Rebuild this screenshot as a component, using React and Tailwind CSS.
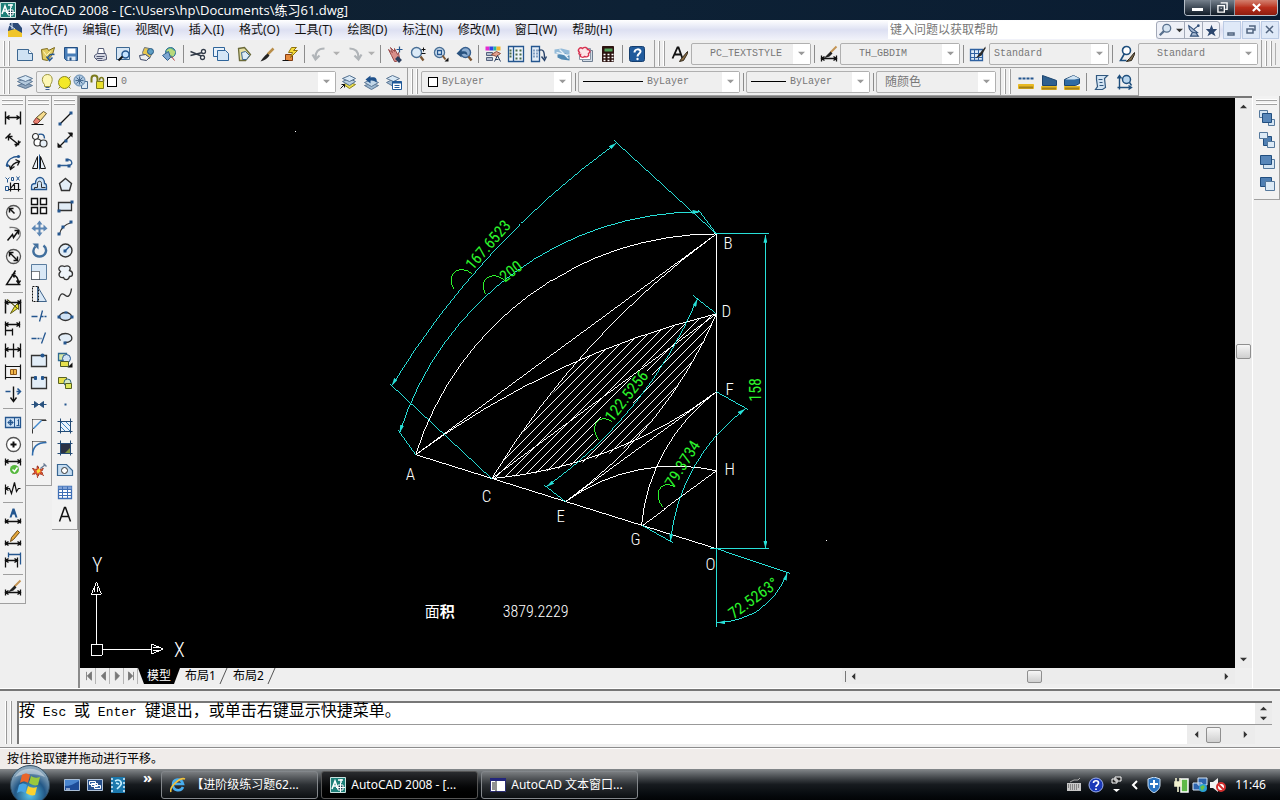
const INK = '#111111'
const BLUE = '#24568f'
const STEEL = '#5c86b4'
const PALE = '#cfe2f3'
const GOLD = '#e8b923'

const icons = {
  new: <><path d="M0 3h11l4 4v7H0z" fill={PALE} stroke="#3c6791" /><path d="M11 3v4h4" fill="#fff" stroke="#3c6791" /></>,
  open: <><path d="M1 3l6-1 1 2 6-3-2 7-5 6-5-1z" fill="#e3cd62" stroke="#7d6a1c" /><path d="M3 5l3 4 4-4" stroke="#fff6c4" /><path d="M14 8c-4-1-6 1-6 3M6 10l3 4 3-3" stroke={BLUE} strokeWidth="1.500" /></>,
  save: <><path d="M1 1h13v13H3l-2-2z" fill="#4a7fb8" stroke="#234f83" /><path d="M4 2h8v5H4z" fill="#fff" /><path d="M4 10h8v4H4z" fill="#dce8f4" /><path d="M6 11h2v3H6z" fill="#234f83" /></>,
  print: <><path d="M5 7l1-5h5l1 5" fill="#fff" stroke="#555d77" /><path d="M2 9l3-2h8l1 3v3l-4 1H5l-3-3z" fill="#d4d7e2" stroke="#4f5672" /><path d="M4 10h8M4 12h6" stroke="#4f5672" /></>,
  preview: <><path d="M1 1h13v12H1z" fill="#d7e6f4" stroke="#3c6791" /><circle cx="10" cy="8" r="3.500" fill="#c5e3ff" stroke={BLUE} strokeWidth="1.400" /><path d="M7 10l-4 4" stroke={INK} strokeWidth="2" /></>,
  publish: <><path d="M4 6l2-5 5 1 3 4-3 6H6z" fill="#e9c74d" stroke="#69727e" /><path d="M1 9l6-1 4 3-3 3-6-1z" fill="#eee" stroke="#3f4a66" /><circle cx="12" cy="5" r="3" fill="#5d9ec4" stroke="#2a5a82" /></>,
  dwf: <><circle cx="9" cy="6" r="5" fill="#62b38c" stroke="#2a6c98" /><path d="M5 4c4-4 6 0 9 1l-2 5-4-2z" fill="#b9d97b" /><path d="M1 9l6-4 2 6-3 3z" fill="#7da7d2" stroke="#34618f" /><path d="M10 10l3 4" stroke="#b23b3b" /></>,
  cut: <><path d="M0 5l12 5M0 9l12-3" stroke="#333c49" strokeWidth="1.400" /><circle cx="13" cy="5" r="2" fill="#fff" stroke="#333c49" strokeWidth="1.300" /><circle cx="12" cy="11" r="2" fill="#fff" stroke="#333c49" strokeWidth="1.300" /></>,
  copy: <><path d="M0 1h11v9H0z" fill="#e9f2fb" stroke="#2f659b" /><path d="M4 4h8l3 3v7H4z" fill="#d4e6f6" stroke="#2f659b" /></>,
  paste: <><path d="M2 2l6-1 6 7-5 6H3z" fill="#e6dfa2" stroke="#6a6a3a" strokeWidth="1.300" /><path d="M5 6l4-1 4 4-3 4H6z" fill="#dcebf8" stroke="#3c6791" /></>,
  brush: <><path d="M14 2L8 8" stroke="#b98e4a" strokeWidth="2.500" /><path d="M8 7l2 2c-2 3-5 5-9 6 2-3 4-6 7-8z" fill="#222" /></>,
  blockEdit: <><path d="M3 8h7v6H3z" fill="#e68a3c" stroke="#823c12" /><path d="M9 1L6 6h4l-2 5 7-7h-4l3-3z" fill="#f6dc3a" stroke="#8f7310" /><path d="M0 14h6" stroke={INK} /></>,
  undo: <path d="M13 2C6 2 4 6 4 11M1 8l3 5 4-4" stroke="#b0b4b8" strokeWidth="2.200" />,
  redo: <path d="M3 2c7 0 9 4 9 9M15 8l-3 5-4-4" stroke="#b0b4b8" strokeWidth="2.200" />,
  pan: <><path d="M1 3l4 3-2-5 4 4 0-3 3 6 1-2 1 6-3 3H7L4 9z" fill="#d98f8a" stroke="#9a4c4c" /><path d="M9 11l4 4" stroke="#2d3f5e" strokeWidth="4" /><path d="M12 0v6M9 3h6" stroke={BLUE} strokeWidth="1.200" /></>,
  zoomRt: <><circle cx="6" cy="6" r="5" fill="#dbeaf7" stroke="#496f96" strokeWidth="1.400" /><path d="M10 10l3 4" stroke="#7b5634" strokeWidth="2.400" /><path d="M13 1v4M11 3h4M11 7h4" stroke={INK} /></>,
  zoomWin: <><circle cx="6" cy="6" r="5" fill="#dbeaf7" stroke="#496f96" strokeWidth="1.400" /><path d="M4 4h4v4H4z" stroke={BLUE} strokeWidth="1.300" /><path d="M9 9l3 4" stroke="#7b5634" strokeWidth="2" /><path d="M15 11v4h-4z" fill={INK} /></>,
  zoomPrev: <><circle cx="9" cy="6" r="5" fill="#8bacd0" stroke="#375f8e" strokeWidth="1.400" /><path d="M0 7l5-5v3c4-1 6 0 6 4-2-2-4-2-6-1v3z" fill="#28527f" /><path d="M12 10l3 4" stroke="#7b5634" strokeWidth="2.400" /></>,
  props: <><path d="M0 0h4v4H0z" fill="#e22bd0" /><path d="M4 0h4v4H4z" fill="#3045e3" /><path d="M8 0h3v4H8z" fill="#25b7a4" /><path d="M11 0h4v4h-4z" fill="#efb62f" /><path d="M1 6h6v3H1zM1 11h6v3H1z" fill="#b3bdd0" stroke="#54627c" /><path d="M6 8l5-3 4 2-4 3z" fill="#e3a08e" stroke="#8e4e3e" /><path d="M9 15l3-6 3 6M10 13h3" stroke="#24395c" /></>,
  designCenter: <><path d="M0 0h15v15H0z" fill="#eef4fa" stroke={BLUE} strokeWidth="1.300" /><path d="M5 0v15" stroke={BLUE} strokeWidth="1.300" /><path d="M1 4h2M1 7h2M1 10h2M7 4h2M11 4h2M7 8h2M11 8h2M7 12h2M11 12h2" stroke="#496b48" strokeWidth="2" /></>,
  palettes: <><path d="M0 0h8v15H0z" fill="#e3edf7" stroke={BLUE} strokeWidth="1.300" /><path d="M2 4h1M2 7h1M2 10h1M5 4h1M5 7h1M5 10h1" stroke={BLUE} strokeWidth="2" /><path d="M7 4c5-2 6 1 6 8M10 10l3 4 2-4" stroke="#28436a" strokeWidth="1.400" /></>,
  sheetSet: <><path d="M0 3l7-1 8 2v4H8L0 7z" fill="#94bbd9" /><path d="M3 8l8-1 4 2v5l-8-1-4-2z" fill="#4f88b3" /><path d="M2 6l12 3M5 3l9 9" stroke="#e7f1f8" strokeWidth="1.300" /></>,
  markup: <><path d="M5 4h10v11H5z" fill="#d3dce6" stroke="#6e7d90" /><path d="M2 2h11v11H2z" fill="#fff" stroke="#8895a6" /><path d="M2 6c-3-3 1-6 3-4 2-2 5-1 5 1 3 0 3 3 1 4 1 3-2 4-4 3-2 2-5 0-4-2-2 0-2-1-1-2z" fill="#fbe4e7" stroke="#d8304f" strokeWidth="1.400" /></>,
  calc: <><path d="M2 0h11v15H2z" fill="#2c1310" stroke="#2c1310" /><path d="M4 2h8v3H4z" fill="#53a35c" /><path d="M3 8h2M7 8h2M11 8h2M3 11h2M7 11h2M11 11h2M3 14h2M7 14h2M11 14h2" stroke="#fff" strokeWidth="1.500" /></>,
  help: <><rect x="0" y="0" width="15" height="15" rx="2" fill="#215b9c" stroke="#153e6f" /><path d="M5 6c0-4 6-4 6-1 0 2-3 2-3 5" stroke="#fff" strokeWidth="2" /><circle cx="8" cy="12.500" r="1.200" fill="#fff" /></>,
  textStyle: <><path d="M0 12L5 1h1l4 11M2 8h6" stroke={INK} strokeWidth="1.800" /><path d="M15 5l-6 7-2 3 4-1 4-7z" fill="#8b6c43" stroke="#332a1b" /></>,
  dimStyle: <><path d="M0 9v6M15 9v6M0 12h15M3 10l-3 2 3 2M12 10l3 2-3 2" stroke={INK} strokeWidth="1.300" /><path d="M15 0L9 6" stroke="#c39454" strokeWidth="2" /><path d="M9 5l2 2-3 3-6 2z" fill="#222" /></>,
  tableStyle: <><path d="M0 3h12v11H0z" fill="#dcebf8" stroke="#2e61a1" strokeWidth="1.300" /><path d="M0 7h12M0 11h12M4 3v11M8 3v11" stroke="#2e61a1" /><path d="M15 0l-6 7-4 5 6-3 4-7z" fill="#2a2a2a" /></>,
  leaderStyle: <><circle cx="7" cy="4" r="4" fill="#fff" stroke="#1f4f7d" strokeWidth="1.600" /><path d="M5 7l-4 7h6" stroke="#1f4f7d" strokeWidth="1.600" /><path d="M15 6l-5 6-3 3 5-1 3-6z" fill="#7c6a4b" stroke="#2b251a" /></>,
  layers: <><path d="M0 11l8-3 7 3-7 3z" fill="#8ea4bc" stroke="#5b7694" /><path d="M0 7l8-3 7 3-7 4z" fill="#b3c8dc" stroke="#5b7694" /><path d="M0 4l8-3 7 3-7 3z" fill="#d8e8f5" stroke="#5b7694" /></>,
  layerCurrent: <><path d="M3 10l6-2 6 2-6 4z" fill="#e9dc4c" stroke="#8b821d" /><path d="M2 7l7-3 6 3-6 4z" fill="#b7ccdf" stroke="#52708f" /><path d="M2 4l7-3 6 3-6 3z" fill="#dae9f6" stroke="#52708f" /><path d="M0 14l4-4M1 10h3v3" stroke={INK} /></>,
  layerPrev: <><path d="M1 11l7-2 7 2-7 4z" fill="#9db8d0" stroke="#5b7694" /><path d="M1 8l7-3 7 3-7 4z" fill="#c3d7e8" stroke="#5b7694" /><path d="M2 5l5-4v2c5-1 7 1 6 5-2-2-3-2-6-2v3z" fill="#20528c" /></>,
  layerState: <><path d="M0 8l6-3 7 3-6 4z" fill="#9fbad2" stroke="#5b7694" /><path d="M0 4l6-3 7 3-6 3z" fill="#d8e8f5" stroke="#5b7694" /><path d="M6 7h9v8H6z" fill="#fff" stroke="#1f5898" /><path d="M6 7h9v2H6z" fill="#1f5898" /><path d="M8 11h5M8 13h5" stroke="#1f5898" /></>,
  bulb: <><path d="M5 10C1 6 3 0 8 0s6 6 3 10v2H5z" fill="#fdf7b5" stroke="#9a9440" /><path d="M6 13h4M6 15h4" stroke="#3b5f91" /></>,
  sun: <><circle cx="8" cy="8" r="6" fill="#f3e928" stroke="#8b8721" /><path d="M2 14l2-2M14 2l-2 2M14 14l-2-2" stroke="#8b8721" /></>,
  freeze: <><path d="M8 7h6v7H8z" fill="#dce9f5" stroke="#4a6d93" /><circle cx="6" cy="6" r="5.500" fill="#a9c4de" stroke="#6087ad" /><path d="M6 2v8M2 6h8M3 3l6 6M9 3L3 9" stroke="#4a6d93" /></>,
  lock: <><path d="M1 8V4c0-4 6-4 6 0v3" stroke="#7b7a1c" strokeWidth="2" /><path d="M6 7h7v7H6z" fill="#e9df2e" stroke="#7b7a1c" /><path d="M9 6c0-4 4-4 4 0v1" stroke="#7b7a1c" strokeWidth="1.500" /></>,
  distance: <><path d="M0 4h15" stroke={BLUE} strokeWidth="2" strokeDasharray="3 1" /><path d="M0 10h15v4H0z" fill={GOLD} stroke={GOLD} /><path d="M1 13h14" stroke="#604a10" strokeWidth="2" strokeDasharray="1 1" /></>,
  area: <><path d="M1 1l14 5v5H1z" fill="#2f608f" stroke="#1c4570" /><path d="M0 12h15v3H0z" fill={GOLD} stroke={GOLD} /><path d="M1 14h14" stroke="#604a10" strokeWidth="2" strokeDasharray="1 1" /></>,
  massprop: <><path d="M0 5l9-4 6 3v5l-4 2H0z" fill="#2f6ba3" stroke="#1c4570" /><path d="M1 5h9l5-1-6-3z" fill="#cfe3f3" /><path d="M0 12h15v3H0z" fill={GOLD} stroke={GOLD} /><path d="M1 14h14" stroke="#604a10" strokeWidth="2" strokeDasharray="1 1" /></>,
  list: <><path d="M3 1h11l-3 3 1 9-3 2H2l2-3-1-7z" fill="#d3e4f3" stroke="#31587f" strokeWidth="1.200" /><path d="M5 5h4M6 8h3M6 11h4" stroke="#31587f" /></>,
  locate: <><path d="M3 15V2M1 4l2-3 2 3M1 13h13M12 11l3 2-3 2" stroke="#1f4f7d" strokeWidth="1.400" /><circle cx="10" cy="5" r="4" fill="#b9d6ee" stroke="#1f4f7d" strokeWidth="1.500" /><path d="M13 8l2 3" stroke="#1f4f7d" strokeWidth="1.500" /></>,

  dimLinear: <path d="M0 1v13M15 1v13M1 7h13M4 5L1 7l3 2M11 5l3 2-3 2" stroke={INK} strokeWidth="1.400" />,
  dimAligned: <path d="M0 6l5-5M10 14l5-5M3 4l10 8M3 8V4h4M13 8v4H9" stroke={INK} strokeWidth="1.400" />,
  dimArc: <><path d="M1 11C2 5 7 2 13 2" stroke={BLUE} strokeWidth="1.500" /><circle cx="13" cy="2" r="1.600" fill={BLUE} /><circle cx="2" cy="11" r="1.600" fill={BLUE} /><path d="M5 15c1-5 4-7 9-8M4 11l1 4 4-3M10 5l4 2-2 4" stroke={INK} strokeWidth="1.300" /></>,
  dimOrdinate: <><path d="M0 1l2 2 2-2M2 3v3M11 0l3 4M14 0l-3 4M0 10h3v4H0zM6 1h2v3H6z" stroke={BLUE} /><path d="M5 6v9M3 13h12M5 12l4-5h4v8M9 8v5" stroke={INK} strokeWidth="1.200" /></>,
  dimRadius: <><circle cx="8" cy="8" r="7" stroke="#555" strokeWidth="1.300" /><path d="M4 4l5 5M4 8V4h4" stroke={INK} strokeWidth="1.500" /></>,
  dimJog: <><path d="M4 1c11-1 14 7 7 13" stroke="#777" strokeWidth="1.300" /><path d="M2 14l5-6 1 3 5-7M9 4h4v4" stroke={INK} strokeWidth="1.500" /></>,
  dimDiameter: <><circle cx="8" cy="8" r="7" stroke="#555" strokeWidth="1.300" /><path d="M4 4l8 8M4 8V4h4M12 8v4H8" stroke={INK} strokeWidth="1.400" /></>,
  dimAngular: <path d="M10 0L1 14h14M7 4c4 1 6 4 6 9M10 3L7 4l2 3M11 10l2 3 2-3" stroke={INK} strokeWidth="1.400" />,
  dimQuick: <><path d="M2 1l11 10V4L9 8 5 15l7-5z" fill="#efe52e" stroke="#5c5a16" /><path d="M0 1v14M15 1v14M0 4h15M3 2L0 4l3 2M12 2l3 2-3 2" stroke={INK} strokeWidth="1.500" /></>,
  dimBaseline: <path d="M0 1v14M0 4h14M14 1v6M0 10h7M7 8v7M3 2L0 4l3 2M11 2l3 2-3 2" stroke={INK} strokeWidth="1.300" />,
  dimContinue: <path d="M0 1v14M8 1v14M15 1v14M0 7h15M3 5L0 7l3 2M12 5l3 2-3 2" stroke={INK} strokeWidth="1.300" />,
  dimSpace: <><path d="M0 0v15M15 0v15M0 2h15M0 13h15" stroke={INK} strokeWidth="1.200" /><path d="M5 5h6v5H5z" fill="#f2b84a" stroke="#8f591b" /><path d="M8 5v5" stroke="#8f591b" /></>,
  dimBreak: <><path d="M0 5h5M11 5h4M12 2l3 3-3 3" stroke={BLUE} strokeWidth="1.500" /><path d="M8 0v14M5 11l3 4 3-4" stroke={INK} strokeWidth="1.400" /></>,
  tolerance: <><path d="M0 3h15v10H0z" fill="#cfe2f5" stroke={BLUE} strokeWidth="1.300" /><path d="M9 3v10M5 5v6M2 8h6M12 6l1-1v6M11 11h3" stroke={BLUE} /><circle cx="5" cy="8" r="2" stroke={BLUE} /></>,
  centerMark: <><circle cx="8" cy="8" r="7" fill="#fff" stroke="#555" strokeWidth="1.300" /><path d="M8 5v6M5 8h6" stroke={INK} strokeWidth="2" /></>,
  inspect: <><path d="M0 0v7M15 0v7M0 3h15M3 1L0 3l3 2M12 1l3 2-3 2" stroke={INK} strokeWidth="1.300" /><circle cx="9" cy="11" r="4.500" fill="#56b83e" /><path d="M7 11l2 2 3-4" stroke="#fff" strokeWidth="1.500" /></>,
  jogLine: <path d="M0 4v10M0 8h4l2 5 3-11 2 9 2-3h2M3 6L0 8l3 2" stroke={INK} strokeWidth="1.200" />,
  dimEdit: <><path d="M4 9l3-9h2l3 9h-2l-1-3H7L6 9z" fill={BLUE} /><path d="M0 10v5M15 10v5M0 13h15M3 11l-3 2 3 2M12 11l3 2-3 2" stroke={INK} strokeWidth="1.300" /></>,
  dimTextEdit: <><path d="M0 10v5M15 10v5M0 13h15M3 11l-3 2 3 2M12 11l3 2-3 2" stroke={INK} strokeWidth="1.300" /><path d="M12 0l2 2-6 7-3 2 1-4z" fill="#e3a63a" stroke="#6c4a16" /></>,
  dimUpdate: <><path d="M3 0v5M15 0v12M3 2h12" stroke={BLUE} strokeWidth="1.300" /><path d="M0 5v10M12 5v10M0 8h12M3 6L0 8l3 2M9 6l3 2-3 2" stroke={INK} strokeWidth="1.300" /></>,

  erase: <><path d="M0 14h12" stroke={INK} /><path d="M2 11l3-4 4 3-3 3H3z" fill="#e98072" stroke="#7c342c" /><path d="M5 7l7-6 3 2-6 7z" fill="#f6dc8d" stroke="#5d522c" /></>,
  copyObj: <><circle cx="4" cy="4" r="3" fill="#fff" stroke="#333" strokeWidth="1.200" /><circle cx="6" cy="10" r="3.500" fill="#fff" stroke="#333" strokeWidth="1.200" /><circle cx="12" cy="11" r="3.500" fill="#e7eff7" stroke="#333" strokeWidth="1.200" /><path d="M7 2c4-1 6 0 6 4" stroke={BLUE} strokeWidth="1.400" /></>,
  mirror: <><path d="M6 2v12H1zM9 2v12h5z" fill="#e9f1f9" stroke={INK} /><path d="M8 0v15" stroke={BLUE} /></>,
  offset: <><path d="M0 13v-3c0-2 2-3 4-3 0-8 9-8 9 0 1 0 2 1 2 3v3z" fill="#cfe3f6" stroke={BLUE} strokeWidth="1.300" /><path d="M3 13v-2h3V7c0-3 4-3 4 0v4h4" stroke="#333" /></>,
  array: <path d="M0 0h6v6H0zM9 0h6v6H9zM0 9h6v6H0zM9 9h6v6H9z" fill="#fff" stroke={INK} strokeWidth="1.400" />,
  move: <path d="M8 0l3 4H9v3h3V4l4 4-4 3V9H9v3h2l-3 4-3-4h2V9H4v2L0 8l4-4v3h3V4H5z" fill={STEEL} />,
  rotate: <><path d="M4 4C0 8 2 14 8 14s9-7 4-11" stroke="#416f9d" strokeWidth="2.400" /><path d="M1 1h6v6z" fill="#416f9d" /></>,
  scale: <><path d="M0 0h15v15H0z" fill="#d9e8f6" stroke="#5b7d9f" /><path d="M0 7h8v8H0z" fill="#fff" stroke={INK} strokeDasharray="1 1" /></>,
  stretch: <><path d="M6 0v15h9z" fill="#d9e8f6" stroke="#3f648b" /><path d="M1 0h6v15H1z" stroke={INK} strokeDasharray="2 1" /></>,
  trim: <path d="M0 8h6M8 13l3-11M10 8h2M13 8h2" stroke={BLUE} strokeWidth="1.300" />,
  extend: <path d="M0 8h5M6 8h2M9 8h1M10 13l4-11" stroke={BLUE} strokeWidth="1.300" />,
  breakPt: <><path d="M0 3h15v11H0z" fill="#e2edf7" stroke="#333" strokeWidth="1.300" /><circle cx="11" cy="3" r="2" fill={BLUE} /></>,
  breakObj: <><path d="M4 3H0v11h15V3h-4" fill="#e2edf7" stroke="#333" strokeWidth="1.300" /><path d="M3 2h2v3H3zM10 2h2v3h-2z" fill={BLUE} stroke={BLUE} /></>,
  join: <path d="M0 8h15M3 5l4 3-4 3zM12 5L8 8l4 3z" stroke="#28517e" fill="#28517e" />,
  chamfer: <><path d="M1 1h14M1 1v14" stroke={INK} strokeDasharray="1 1" /><path d="M1 15v-4L10 2h5" stroke="#333" /><path d="M2 10l8-8" stroke="#4389ce" strokeWidth="1.500" /></>,
  fillet: <><path d="M1 1h14M1 1v14" stroke={INK} strokeDasharray="1 1" /><path d="M1 15C1 6 6 2 15 2" stroke="#2e6bab" strokeWidth="1.600" /></>,
  explode: <><path d="M1 6l4 1 1-4 2 4 4-1-2 3 2 4-4-2-2 4-1-4-4 1 2-3z" fill="#e5572d" stroke="#922a18" strokeDasharray="2 1" /><path d="M5 8l3-2 1 3-3 2z" fill="#f6df39" /><path d="M9 6l5-4M12 1l3 3" stroke="#6b7d96" strokeWidth="1.400" /></>,

  line: <><path d="M2 14L13 3" stroke={INK} strokeWidth="1.300" /><path d="M1 12h3v3H1zM12 1h3v3h-3z" fill={BLUE} /></>,
  xline: <><path d="M1 15L15 1" stroke={INK} strokeWidth="1.300" /><path d="M0 15v-5l5 5zM15 0v5l-5-5z" fill={INK} /><path d="M7 7h3v3H7z" fill={BLUE} /></>,
  pline: <><path d="M1 11h10c5 0 4-6-1-6" stroke="#2f5f95" strokeWidth="1.400" /><path d="M0 10h3v3H0zM10 10h3v3h-3zM8 4h3v3H8z" fill={BLUE} /></>,
  polygon: <path d="M8 2l6 5-2 7H4L2 7z" fill="#e2edf7" stroke="#333" strokeWidth="1.400" />,
  rect: <><path d="M1 4h13v8H1z" fill="#e2edf7" stroke="#333" strokeWidth="1.300" /><path d="M0 11h3v3H0zM13 2h3v3h-3z" fill={BLUE} /></>,
  arc: <><path d="M2 14C3 8 7 4 14 2" stroke="#333" strokeWidth="1.300" /><path d="M0 12h3v3H0zM4 5h3v3H4zM12 0h3v3h-3z" fill={BLUE} /></>,
  circle: <><circle cx="8" cy="8" r="6.500" fill="#e2edf7" stroke="#333" strokeWidth="1.400" /><path d="M8 8l4-4" stroke={BLUE} strokeWidth="1.300" /><path d="M6 7h3v3H6z" fill={BLUE} /></>,
  revcloud: <path d="M3 7C-1 4 3 0 7 2c4-2 7 1 5 4 4 1 4 6 0 6-1 4-5 4-6 1-4 1-6-3-3-6z" fill="#eef4fa" stroke="#333" strokeWidth="1.300" />,
  spline: <path d="M1 14c2-9 5-7 7-5s5 1 6-7" stroke="#333" strokeWidth="1.300" />,
  ellipse: <><ellipse cx="8" cy="8" rx="6" ry="4" fill="#cfe2f5" stroke="#333" strokeWidth="1.300" /><path d="M0 7h3v3H0zM13 7h3v3h-3zM7 3h3v2H7z" fill={BLUE} /></>,
  ellipseArc: <><path d="M3 10C-1 6 3 3 8 3c8 0 9 9 0 9H7" fill="#e2edf7" stroke="#333" strokeWidth="1.300" /><path d="M6 11h3v3H6z" fill={BLUE} /></>,
  insert: <><path d="M1 1h8v7H1z" fill="#d7e7a5" stroke="#2f6a91" strokeWidth="1.300" /><circle cx="9" cy="6" r="4" fill="#cfe2f5" stroke={BLUE} /><path d="M3 9h8v5H3z" fill="#e7e14d" stroke="#4d5b28" /><path d="M15 10v5h-5z" fill={INK} /></>,
  block: <><path d="M1 3h8v6H1z" fill="#e7e14d" stroke="#596221" /><circle cx="10" cy="8" r="3.500" fill="#d5e9c8" stroke="#31637a" /><path d="M8 9h6v5H8z" fill="#dfe95a" stroke="#596221" /></>,
  point: <path d="M7 7h2v2H7z" fill={BLUE} />,
  hatch: <><path d="M3 3h10v10H3z" fill="#eaf3fb" /><path d="M3 3l10 10M3 8l5 5M8 3l5 5" stroke="#3e85c4" /><path d="M3 0v15M13 0v15M0 3h15M0 13h15" stroke="#234a74" /></>,
  gradient: <><path d="M3 3h10v10H3z" fill="#2a3144" /><path d="M7 13l6-6v6z" fill="#7f9240" /><path d="M3 0v15M13 0v15M0 3h15M0 13h15" stroke="#234a74" /></>,
  region: <><path d="M0 13V2h9l6 6v5z" fill="#c4dcf1" stroke="#396793" strokeWidth="1.200" /><circle cx="7" cy="8" r="3" fill="#fff" stroke="#333" /></>,
  table: <><path d="M1 2h13v12H1z" fill="#fff" stroke="#3f6fb5" strokeWidth="1.300" /><path d="M1 2h13v3H1z" fill="#7fa2d7" /><path d="M1 5h13M1 8h13M1 11h13M5 2v12M10 2v12" stroke="#3f6fb5" /></>,
  mtext: <path d="M2 15L7 1h1l5 14M4 10h7" stroke={INK} strokeWidth="1.500" />,

  front1: <><path d="M0 0h8v7H0zM9 9h6v6H9z" fill="#d5e5f3" stroke="#55789c" /><path d="M3 3h9v9H3z" fill="#5786b9" stroke="#214e7f" /></>,
  front2: <><path d="M4 4h8v9H4z" fill="#4f7fb3" stroke="#214e7f" /><path d="M0 0h8v6H0zM8 9h7v6H8z" fill="#dceaf6" stroke="#55789c" /></>,
  front3: <><path d="M4 5h11v9H4z" fill="#d5e5f3" stroke="#55789c" /><path d="M1 1h11v9H1z" fill="#5786b9" stroke="#214e7f" /></>,
  front4: <><path d="M1 1h11v9H1z" fill="#4f7fb3" stroke="#214e7f" /><path d="M6 5h9v9H6z" fill="#dceaf6" stroke="#55789c" /></>,
}

const CAD_LABEL = "[font-family:'Roboto_Condensed','Liberation_Sans_Narrow','Liberation_Sans',sans-serif]"

function Icon({ name }) {
  return (
    <svg viewBox="-0.5 -0.5 16 16" className="size-4 shrink-0 overflow-visible" fill="none" aria-hidden="true">
      {icons[name]}
    </svg>
  )
}

function AcadLogo() {
  return (
    <svg viewBox="0 0 16 16" className="size-4 shrink-0" aria-hidden="true">
      <path d="M0.500 0.500h15v15H0.500z" fill="#1d7f78" stroke="#c8e2df" />
      <path d="M2 12L5 4l3 8M3 9h4M11 2v4M8 3h5" stroke="#fff" strokeWidth="1.500" fill="none" />
      <path d="M8 8h5v5H8zM10.500 6v9M6 10.500h9" stroke="#fff" fill="#173a4c" />
    </svg>
  )
}

function Tool({ name }) {
  return (
    <button aria-label={name} className="flex h-[22px] w-[23px] shrink-0 items-center justify-center">
      <Icon name={name} />
    </button>
  )
}

function Tools({ names }) {
  return names.map((name, i) =>
    name === '|' ? <Sep key={i} /> : <Tool key={i} name={name} />
  )
}

function Sep() {
  return (
    <span className="flex w-[6px] shrink-0 justify-center">
      <span className="h-[18px] w-px bg-[#8c8c8c]" />
    </span>
  )
}

function Grip() {
  return (
    <span className="flex w-[13px] shrink-0 justify-center gap-[3px] self-stretch py-px">
      <span className="w-[2px] border-r border-[#a0a0a0] bg-white" />
      <span className="w-[2px] border-r border-[#a0a0a0] bg-white" />
    </span>
  )
}

function Bar({ children, className = '' }) {
  return (
    <div className={`flex h-7 shrink-0 items-center border-r border-b border-[#a0a0a0] ${className}`}>
      {children}
    </div>
  )
}

function Arrow({ dir = 'down', className = 'fill-[#333]' }) {
  const points = {
    down: '0,2 8,2 4,6',
    up: '0,6 8,6 4,2',
    left: '6,0 6,8 2,4',
    right: '2,0 2,8 6,4',
  }
  return (
    <svg viewBox="0 0 8 8" className={`size-[7px] shrink-0 ${className}`} aria-hidden="true">
      <polygon points={points[dir]} />
    </svg>
  )
}

function Combo({ label, value, className, pad = 'pl-[8px]', children }) {
  return (
    <label className={`relative flex h-[22px] shrink-0 items-center ${className}`}>
      <select
        aria-label={label}
        className={`h-full w-full appearance-none rounded-[2px] border border-[#b0b0b0] bg-[#efefef] ${pad} [font-family:'Liberation_Mono','Noto_Sans_CJK_SC',monospace] text-[10px] text-[#777]`}
      >
        <option>{value}</option>
      </select>
      <span className="pointer-events-none absolute inset-y-px right-px flex w-[17px] items-center justify-center bg-white">
        <Arrow className="fill-[#999]" />
      </span>
      {children}
    </label>
  )
}

function TitleBar() {
  return (
    <header className="flex h-5 shrink-0 items-center bg-gradient-to-r from-[#10202f] via-[#0d2135] to-[#0a1c31] pr-[2px]">
      <AcadLogo />
      <h1 className="ml-[5px] flex-1 [font-family:'Open_Sans','Noto_Sans_CJK_SC',sans-serif] text-[13px] leading-5 text-white">
        AutoCAD 2008 - [C:\Users\hp\Documents\练习61.dwg]
      </h1>
      <div className="flex h-[16px] self-start overflow-hidden rounded-b-[4px] border border-t-0 border-[#b6bec8]">
        <button aria-label="最小化" className="flex w-[26px] items-end justify-center border-r border-[#8c97a4] bg-gradient-to-b from-[#75808c] to-[#111c28] pb-1">
          <span className="h-[3px] w-[11px] bg-white" />
        </button>
        <button aria-label="还原" className="flex w-[24px] items-center justify-center border-r border-[#8c97a4] bg-gradient-to-b from-[#75808c] to-[#111c28]">
          <svg viewBox="0 0 12 12" className="size-[11px]"><path d="M4 1h7v7H9M1 4h7v7H1zM4 7h1" fill="none" stroke="#fff" strokeWidth="1.500" /></svg>
        </button>
        <button aria-label="关闭" className="flex w-[42px] items-center justify-center bg-gradient-to-b from-[#d3806f] via-[#b92f1c] to-[#8f1d0f]">
          <svg viewBox="0 0 10 10" className="size-[9px]"><path d="M1 1l8 8M9 1L1 9" stroke="#fff" strokeWidth="2.400" /></svg>
        </button>
      </div>
    </header>
  )
}

const menus = ['文件(F)', '编辑(E)', '视图(V)', '插入(I)', '格式(O)', '工具(T)', '绘图(D)', '标注(N)', '修改(M)', '窗口(W)', '帮助(H)']

function MenuBar() {
  return (
    <nav className="flex h-5 shrink-0 items-center bg-gradient-to-b from-white via-[#dde0f2] to-[#f2f3fa] pr-px pl-[7px]">
      <svg viewBox="0 0 16 16" className="size-4 shrink-0" aria-hidden="true">
        <path d="M3 1h8l4 5v9H1V8z" fill="#2b4a78" /><path d="M1 9l7-2 7 4v4H1z" fill="#f0c52e" /><path d="M2 3l6 4M5 0v7" stroke="#dce9f8" />
      </svg>
      <div className="ml-[7px] flex gap-[15px]">
        {menus.map((m) => (
          <button key={m} className="text-[12px] leading-5 whitespace-nowrap text-[#111]">{m}</button>
        ))}
      </div>
      <input
        aria-label="帮助搜索"
        placeholder="键入问题以获取帮助"
        className="ml-auto h-[18px] w-[268px] bg-white px-[2px] text-[12px] placeholder:text-[#777]"
      />
      <div className="flex h-[18px] rounded-[3px] border border-[#a3a9b8] bg-[#eef0f7]">
        <button aria-label="搜索" className="flex w-[27px] items-center justify-center gap-[4px]">
          <svg viewBox="0 0 16 16" className="size-[14px]"><circle cx="10" cy="6" r="4.500" fill="#d6e4f2" stroke="#58708e" strokeWidth="1.500" /><path d="M7 9l-5 5" stroke="#58708e" strokeWidth="2.500" /></svg>
          <Arrow className="fill-[#333]" />
        </button>
        <button aria-label="通讯中心" className="flex w-[18px] items-center justify-center border-l border-[#a3a9b8]">
          <svg viewBox="0 0 16 16" className="size-[14px]"><path d="M2 3c0 6 4 9 10 8zM8 7l5-4M6 11l-2 4h9l-3-4" fill="#a6b9d3" stroke="#32507a" strokeWidth="1.300" /><circle cx="13" cy="3" r="1.500" fill="#32507a" /></svg>
        </button>
        <button aria-label="收藏夹" className="flex w-[17px] items-center justify-center border-l border-[#a3a9b8]">
          <svg viewBox="0 0 16 16" className="size-[13px]"><path d="M8 1l2 5h5l-4 4 2 5-5-3-5 3 2-5-4-4h5z" fill="#2b456e" /></svg>
        </button>
      </div>
      <div className="ml-[3px] flex gap-px">
        {['M2 9h6v2H2z', 'M4 2h6v4H8M2 5h6v4H2z', 'M2 2l7 7M9 2L2 9'].map((d, i) => (
          <button key={d} aria-label={['最小化图形', '还原图形', '关闭图形'][i]} className="flex h-[18px] w-[18px] items-center justify-center border border-[#bccbe4] bg-[#dfe9f8]">
            <svg viewBox="0 0 12 12" className="size-3"><path d={d} fill="none" stroke="#51647f" strokeWidth="1.500" /></svg>
          </button>
        ))}
      </div>
    </nav>
  )
}

function DropArrow() {
  return (
    <button aria-label="更多" className="flex h-[22px] w-[12px] shrink-0 items-center justify-center">
      <Arrow className="fill-[#b0b0b0]" />
    </button>
  )
}

function StandardBars() {
  return (
    <div className="flex shrink-0 overflow-hidden">
      <Bar className="pr-[6px]">
        <Grip />
        <Tools names={['new', 'open', 'save', '|', 'print', 'preview', 'publish', 'dwf', '|', 'cut', 'copy', 'paste', 'brush', 'blockEdit', '|', 'undo']} />
        <DropArrow />
        <Tool name="redo" />
        <DropArrow />
        <Tools names={['|', 'pan', 'zoomRt', 'zoomWin', 'zoomPrev', '|', 'props', 'designCenter', 'palettes', 'sheetSet', 'markup', 'calc', '|', 'help']} />
      </Bar>
      <Bar className="pr-[3px]">
        <Grip />
        <Tool name="textStyle" />
        <Combo label="文字样式" value="PC_TEXTSTYLE" className="w-[120px]" pad="pl-[18px]" />
        <Sep />
        <Tool name="dimStyle" />
        <Combo label="标注样式" value="TH_GBDIM" className="w-[120px]" pad="pl-[18px]" />
        <Sep />
        <Tool name="tableStyle" />
        <Combo label="表格样式" value="Standard" className="w-[120px]" pad="pl-[4px]" />
        <Sep />
        <Tool name="leaderStyle" />
        <Combo label="多重引线样式" value="Standard" className="w-[120px]" pad="pl-[18px]" />
      </Bar>
      <Bar className="flex-1 border-r-0">
        <Grip />
        <span className="h-[22px] flex-1 border-l border-[#b0b0b0]" />
      </Bar>
    </div>
  )
}

function PropertyBars() {
  return (
    <div className="flex shrink-0 overflow-hidden">
      <Bar className="pr-[2px]">
        <Grip />
        <Tool name="layers" />
        <Combo label="图层" value="0" className="w-[300px]" pad="pl-[84px]">
          <span className="pointer-events-none absolute left-[3px] flex items-center gap-px">
            <Icon name="bulb" />
            <Icon name="sun" />
            <Icon name="freeze" />
            <Icon name="lock" />
            <span className="size-[10px] border border-black bg-white" />
          </span>
        </Combo>
        <Tools names={['layerCurrent', 'layerPrev', 'layerState']} />
      </Bar>
      <Bar className="pr-[4px]">
        <Grip />
        <Combo label="颜色" value="ByLayer" className="w-[151px]" pad="pl-[20px]">
          <span className="pointer-events-none absolute left-[7px] size-[10px] border border-black bg-white" />
        </Combo>
        <Sep />
        <Combo label="线型" value="ByLayer" className="w-[162px]" pad="pl-[68px]">
          <span className="pointer-events-none absolute left-[5px] h-px w-[60px] bg-black" />
        </Combo>
        <Sep />
        <Combo label="线宽" value="ByLayer" className="w-[124px]" pad="pl-[43px]">
          <span className="pointer-events-none absolute left-[5px] h-px w-[35px] bg-black" />
        </Combo>
        <Sep />
        <label className="relative flex h-[22px] w-[120px]">
          <select aria-label="打印样式" className="h-full w-full appearance-none rounded-[2px] border border-[#b0b0b0] bg-[#efefef] pl-[8px] text-[12px] text-[#777]">
            <option>随颜色</option>
          </select>
          <span className="pointer-events-none absolute inset-y-px right-px flex w-[17px] items-center justify-center bg-white">
            <Arrow className="fill-[#999]" />
          </span>
        </label>
      </Bar>
      <Bar className="pr-[3px]">
        <Grip />
        <Tools names={['distance', 'area', 'massprop', '|', 'list', 'locate']} />
      </Bar>
    </div>
  )
}

const dimensionTools = [
  'dimLinear', 'dimAligned', 'dimArc', 'dimOrdinate', '|',
  'dimRadius', 'dimJog', 'dimDiameter', 'dimAngular', '|',
  'dimQuick', 'dimBaseline', 'dimContinue', 'dimSpace', 'dimBreak', '|',
  'tolerance', 'centerMark', 'inspect', 'jogLine', '|',
  'dimEdit', 'dimTextEdit', 'dimUpdate', '|', 'dimStyle',
]
const modifyTools = [
  'erase', 'copyObj', 'mirror', 'offset', 'array', 'move', 'rotate', 'scale', 'stretch',
  'trim', 'extend', 'breakPt', 'breakObj', 'join', 'chamfer', 'fillet', 'explode',
]
const drawTools = [
  'line', 'xline', 'pline', 'polygon', 'rect', 'arc', 'circle', 'revcloud', 'spline', 'ellipse',
  'ellipseArc', 'insert', 'block', 'point', 'hatch', 'gradient', 'region', 'table', 'mtext',
]

function ToolColumn({ names }) {
  return (
    <div className="flex w-[26px] shrink-0 flex-col items-center self-start border-r border-b border-[#a0a0a0] bg-[#f2f2f2] pt-[3px] pb-[4px]">
      <span className="mb-[2px] flex w-[21px] flex-col gap-[2px]">
        <span className="h-[2px] border-b border-[#a0a0a0] bg-white" />
        <span className="h-[2px] border-b border-[#a0a0a0] bg-white" />
      </span>
      {names.map((name, i) =>
        name === '|' ? (
          <span key={i} className="flex h-[6px] w-[20px] shrink-0 items-center">
            <span className="h-px w-full bg-[#a0a0a0]" />
          </span>
        ) : (
          <Tool key={i} name={name} />
        )
      )}
    </div>
  )
}

// Points on the two radii of the sector, in drawing coordinates.
const labels = [
  { t: 'A', x: 406, y: 480 },
  { t: 'C', x: 482, y: 502 },
  { t: 'E', x: 557, y: 522 },
  { t: 'G', x: 631, y: 545 },
  { t: 'O', x: 706, y: 570 },
  { t: 'B', x: 724, y: 249 },
  { t: 'D', x: 722, y: 317 },
  { t: 'F', x: 726, y: 395 },
  { t: 'H', x: 725, y: 475 },
]

const dims = [
  { t: '167.6523', x: 473, y: 271, a: -49, arc: 'M454 289C448 278 454 269 463 270C467 270 470 272 472 274' },
  { t: '200', x: 505, y: 283, a: -37, arc: 'M486 294C480 284 486 276 494 276C500 276 503 279 505 281' },
  { t: '122.5256', x: 613, y: 423, a: -52, arc: 'M599 440C592 430 595 420 604 419C607 419 610 420 612 422' },
  { t: '79.3734', x: 674, y: 489, a: -58, arc: 'M663 507C655 496 659 486 667 485C671 485 674 486 676 488' },
  { t: '158', x: 762, y: 402, a: -90 },
  { t: '72.5263°', x: 734, y: 620, a: -36 },
]

function Drawing() {
  const lens = 'M491 478A850 850 0 0 1 582 358A850 850 0 0 1 716 313A443 443 0 0 1 627 446A443 443 0 0 1 491 478Z'
  const hatch = Array.from({ length: 40 }, (_, i) => 900 + i * 9)
  return (
    <svg viewBox="80 98 1156 570" preserveAspectRatio="xMinYMin meet" className="block h-full w-full" fill="none" role="img" aria-label="图形">
      <defs>
        <clipPath id="lens"><path d={lens} /></clipPath>
        <marker id="tip" viewBox="0 0 8 4" refX="8" refY="2" markerWidth="8" markerHeight="4" markerUnits="userSpaceOnUse" orient="auto-start-reverse">
          <path d="M0 0l8 2-8 2z" fill="#27e0d8" />
        </marker>
      </defs>
      <g shapeRendering="crispEdges" strokeWidth="1" transform="translate(1 1)">
        <g stroke="#fff" clipPath="url(#lens)">
          {hatch.map((s) => (
            <path key={s} d={`M${s - 520} 520L${s - 280} 280`} />
          ))}
          <path d="M600 442L654 376L640 365L590 430Z" fill="#000" stroke="none" />
        </g>
        <g stroke="#fff">
          <path d="M716 233V548L415 454" />
          <path d="M415 454A315 315 0 0 1 716 233" />
          <path d="M415 454L716 233M491 478L716 313M565 501L716 391M641 525L716 470" />
          <path d="M415 454A850 850 0 0 1 716 313" />
          <path d="M491 478A850 850 0 0 1 716 233" />
          <path d="M491 478A443 443 0 0 0 716 391" />
          <path d="M565 501A443 443 0 0 0 716 313" />
          <path d="M565 501A188 188 0 0 1 716 470" />
          <path d="M641 525A188 188 0 0 1 716 391" />
          <path d="M294 131h1M826 540h1" />
        </g>
        <g stroke="#27e0d8">
          <path d="M491 478L389 383M716 233L613 139M415 454L397 429M716 233L698 209" />
          <path d="M716 313L693 295M565 501L543 484M716 391L748 409M641 525L673 543" />
          <path d="M716 233H769M710 548H769M716 548L790 573M716 548V626" />
          <g markerStart="url(#tip)" markerEnd="url(#tip)">
            <path d="M391 385A850 850 0 0 1 616 142" />
            <path d="M399 432A315 315 0 0 1 700 211" />
            <path d="M546 486A443 443 0 0 0 697 298" />
            <path d="M670 541A188 188 0 0 1 745 408" />
            <path d="M765 234V548" />
            <path d="M787 572A75 75 0 0 1 717 622" />
          </g>
        </g>
      </g>
      <g shapeRendering="crispEdges" stroke="#fff">
        <path d="M91.500 644.500h11v11h-11zM96.500 644V594M102 649.500h49" />
        <path d="M91.500 594.500h10l-5-12zM151.500 644.500v10l12-5zM95 592v-5M98 592v-5M153 648h6M153 651h6" />
      </g>
      <g className={CAD_LABEL} fontSize="17" fill="#fff" fontWeight="300">
        {labels.map((l) => (
          <text key={l.t} x={l.x} y={l.y}>{l.t}</text>
        ))}
        <text x="503" y="617" fontSize="16">3879.2229</text>
        <text x="92" y="572" fontSize="20">Y</text>
        <text x="174" y="657" fontSize="20">X</text>
      </g>
      <g className="[font-family:'Noto_Sans_CJK_SC',sans-serif]" fontSize="15" fill="#fff">
        <text x="425" y="617">面<tspan fontWeight="700">积</tspan></text>
      </g>
      <g className={CAD_LABEL} fontSize="16" fill="#2cf42c">
        {dims.map((d) => (
          <g key={d.t}>
            {d.arc && <path d={d.arc} stroke="#2cf42c" fill="none" shapeRendering="crispEdges" />}
            <text transform={`translate(${d.x} ${d.y}) rotate(${d.a})`}>{d.t}</text>
          </g>
        ))}
      </g>
    </svg>
  )
}

function Thumb({ className }) {
  return <span className={`rounded-[2px] border border-[#8f8f8f] bg-gradient-to-b from-[#f7f7f7] to-[#cfcfcf] ${className}`} />
}

function LayoutTabs() {
  const nav = ['M3 1v10M9 1L4 6l5 5z', 'M9 1L4 6l5 5z', 'M4 1l5 5-5 5z', 'M9 1v10M3 1l5 5-5 5z']
  return (
    <div className="flex h-4 shrink-0 bg-[#efefef] pr-[17px]">
      <div className="flex pl-[2px]">
        {nav.map((d, i) => (
          <button key={d} aria-label={['第一个', '上一个', '下一个', '最后一个'][i]} className="flex w-[14px] items-center justify-center border-r border-[#b5b5b5]">
            <svg viewBox="0 0 12 12" className="size-[10px]"><path d={d} fill="#777" stroke="#777" /></svg>
          </button>
        ))}
      </div>
      <button className="bg-black px-[9px] text-[12px] leading-4 text-white [clip-path:polygon(0_0,100%_0,calc(100%-6px)_100%,6px_100%)]">模型</button>
      {['布局1', '布局2'].map((t) => (
        <button key={t} className="flex text-[12px] leading-4 text-black">
          <span className="pl-[5px]">{t}</span>
          <svg viewBox="0 0 12 16" className="h-4 w-[12px]"><path d="M4 16L11 0" stroke="#555" fill="none" /></svg>
        </button>
      ))}
      <span className="flex-1" />
      <div className="flex w-[34%] items-center bg-[#ececec]">
        <span className="h-[11px] w-[4px] border-r border-[#777]" />
        <span className="ml-[4px]"><Arrow dir="left" /></span>
        <span className="flex flex-1 justify-center pr-[12px]"><Thumb className="h-[13px] w-[15px]" /></span>
        <span className="mr-[5px]"><Arrow dir="right" /></span>
      </div>
    </div>
  )
}

function Workspace() {
  return (
    <div className="flex min-h-0 flex-1">
      <ToolColumn names={dimensionTools} />
      <ToolColumn names={modifyTools} />
      <ToolColumn names={drawTools} />
      <main className="flex min-w-0 flex-1 flex-col border-l-2 border-[#8a8a8a] pb-[5px]">
        <div className="flex min-h-0 flex-1 border-t-2 border-[#777]">
          <div className="min-h-0 min-w-0 flex-1 bg-black">
            <Drawing />
          </div>
          <div className="flex w-[17px] shrink-0 flex-col items-center justify-between bg-[#ececec] py-[5px]">
            <Arrow dir="up" />
            <span className="flex flex-1 flex-col items-center">
              <span className="flex-[44]" />
              <Thumb className="h-[15px] w-[15px]" />
              <span className="flex-[56]" />
            </span>
            <Arrow dir="down" />
          </div>
        </div>
        <LayoutTabs />
      </main>
      <div className="flex shrink-0 border-l border-white pl-px">
        <ToolColumn names={['front1', 'front2', 'front3', 'front4']} />
      </div>
    </div>
  )
}

function CommandWindow() {
  return (
    <section className="flex shrink-0 border-t-2 border-b border-t-[#777] border-b-[#8c8c8c] pt-[10px] pr-[8px] pb-[3px] shadow-[0_-1px_0_#fff]">
      <div className="flex w-[17px] shrink-0 justify-center gap-[3px]">
        <span className="w-[2px] border-r border-[#999] bg-white" />
        <span className="w-[2px] border-r border-[#999] bg-white" />
      </div>
      <div className="min-w-0 flex-1 border-t-2 border-l-2 border-[#777]">
        <div className="flex h-[22px] border-b border-[#999] bg-white">
          <p className="flex-1 text-[16px] leading-[14px] whitespace-pre text-black [&>span]:[font-family:'Liberation_Mono',monospace] [&>span]:text-[13px]">
            按<span> Esc </span>或<span> Enter </span>键退出，或单击右键显示快捷菜单。
          </p>
          <div className="flex w-[17px] flex-col items-center justify-around bg-[#ececec]">
            <Arrow dir="up" />
            <Arrow dir="down" />
          </div>
        </div>
        <div className="flex h-[19px] pr-[17px]">
          <input aria-label="命令" className="min-w-0 flex-1 bg-white px-1 text-[13px] outline-none" />
          <div className="flex w-[68px] items-center justify-between bg-[#ececec] px-[6px]">
            <Arrow dir="left" />
            <Thumb className="mr-4 h-[16px] w-[15px]" />
            <Arrow dir="right" />
          </div>
        </div>
      </div>
    </section>
  )
}

function TaskButton({ children, icon, active }) {
  return (
    <button
      className={`flex h-[28px] w-[157px] items-center gap-[5px] rounded-[3px] border px-[8px] text-[12px] whitespace-nowrap text-white ${
        active
          ? 'border-[#555] bg-gradient-to-b from-[#2a2c2f] to-black'
          : 'border-[#83878b] bg-gradient-to-b from-[#7a7d80] via-[#2b2f33] to-[#0c0f12]'
      }`}
    >
      {icon}
      <span>{children}</span>
    </button>
  )
}

function Taskbar() {
  return (
    <footer className="flex h-[31px] shrink-0 items-center bg-gradient-to-b from-[#85898c] via-[#171b1f] via-50% to-[#020406]">
      <button aria-label="开始" className="ml-[9px] w-[42px] shrink-0">
        <svg viewBox="0 0 42 42" className="-my-2 size-[42px]">
          <defs>
            <radialGradient id="orb" cx="50%" cy="75%" r="65%">
              <stop offset="0" stopColor="#5ac6ec" />
              <stop offset="0.600" stopColor="#225786" />
              <stop offset="1" stopColor="#8aa6bb" />
            </radialGradient>
          </defs>
          <circle cx="21" cy="21" r="19.500" fill="url(#orb)" stroke="#324e63" />
          <path d="M6 13C12 2 30 2 36 13 27 9 15 9 6 13z" fill="#fff" opacity="0.400" />
          <path d="M13 11c3-2 5-2 8 0l-2 8c-3-2-5-2-8 0z" fill="#e9652a" />
          <path d="M22 12c3 2 6 2 9 1l-2 8c-3 1-6 0-9-2z" fill="#9bc93d" />
          <path d="M10 21c3-2 5-2 8 0l-2 8c-3-2-5-2-8 0z" fill="#48a3e2" />
          <path d="M19 22c3 2 6 2 9 1l-2 8c-3 1-6 0-9-2z" fill="#fbd22f" />
        </svg>
      </button>
      <div className="ml-[13px] flex items-center gap-[7px]">
        <button aria-label="显示桌面">
          <svg viewBox="0 0 16 16" className="size-4"><path d="M0.500 2.500h15v11H0.500z" fill="#4a86cf" stroke="#a9bed6" /><path d="M1 9c5 0 9-2 14-5v9H1z" fill="#1d4c98" /><path d="M2 12h4" stroke="#fff" /></svg>
        </button>
        <button aria-label="切换窗口">
          <svg viewBox="0 0 16 16" className="size-4"><path d="M0.500 2.500h15v11H0.500z" fill="#254f8c" stroke="#b2c3d8" /><path d="M2.500 4.500h6v3h-6zM4.500 6.500h6v3h-6zM7.500 8.500h6v3h-6z" fill="#3467a8" stroke="#fff" /></svg>
        </button>
        <button aria-label="媒体">
          <svg viewBox="0 0 16 16" className="size-4"><path d="M1 0h14v16H1z" fill="#1b78ac" /><path d="M2 1v14M14 1v14" stroke="#dcefff" strokeWidth="1.500" strokeDasharray="2 2" /><path d="M5 4c5-3 8 2 5 5l-3 3M6 6l3 1" stroke="#c5f0ff" strokeWidth="1.600" fill="none" /></svg>
        </button>
      </div>
      <span className="ml-[17px] pb-[14px] text-[15px] leading-none font-bold text-white">»</span>
      <div className="ml-[9px] flex gap-[3px]">
        <TaskButton
          icon={<svg viewBox="0 0 16 16" className="size-4 shrink-0"><path d="M13 10c-2 5-10 4-10-2s8-8 10-1H5" stroke="#48aef0" strokeWidth="2.600" fill="none" /><path d="M1 15C-1 10 10 0 15 2" stroke="#f2c33c" strokeWidth="1.600" fill="none" /></svg>}
        >
          【进阶级练习题62...
        </TaskButton>
        <TaskButton active icon={<AcadLogo />}>AutoCAD 2008 - [...</TaskButton>
        <TaskButton
          icon={<svg viewBox="0 0 16 16" className="size-4 shrink-0"><path d="M0.500 1.500h15v13H0.500z" fill="#fff" stroke="#2b2d73" /><path d="M0 1h16v3H0z" fill="#23267b" /><path d="M2 6h3M2 8h3M2 10h3M2 12h3M6 4v11" stroke="#222" /></svg>}
        >
          AutoCAD 文本窗口...
        </TaskButton>
      </div>
      <div className="ml-auto flex items-center pr-[14px] text-white">
        <svg viewBox="0 0 16 16" className="size-4" aria-hidden="true"><path d="M1 6h14v8H1z" fill="#c8c8c8" /><path d="M2 8h12M2 10h12M4 12h8" stroke="#444" strokeDasharray="1 1" /><path d="M4 5l4-2h4l2-2" stroke="#aaa" fill="none" /></svg>
        <svg viewBox="0 0 16 16" className="ml-[6px] size-4" aria-hidden="true"><circle cx="8" cy="8" r="7" fill="#1a38b8" stroke="#9fb2ee" /><path d="M5.500 6c0-3 5-3 5 0 0 2-2.500 2-2.500 4M8 11.500v1.500" stroke="#fff" strokeWidth="1.700" fill="none" /></svg>
        <svg viewBox="0 0 12 20" className="ml-[7px] h-5 w-3" aria-hidden="true"><path d="M4 2h6v4H4zM1 4h5v4H1z" fill="#222" stroke="#fff" /><path d="M2 14h7l-3.500 3z" fill="#fff" /></svg>
        <svg viewBox="0 0 10 10" className="ml-[7px] size-[10px]" aria-hidden="true"><path d="M7 1L3 5l4 4" stroke="#fff" strokeWidth="2" fill="none" /></svg>
        <svg viewBox="0 0 16 16" className="ml-[6px] size-4" aria-hidden="true"><path d="M8 0l6 2v6c0 4-3 6-6 8-3-2-6-4-6-8V2z" fill="#2b74c2" stroke="#cfe1f3" /><path d="M8 3v8M4 7h8" stroke="#fff" strokeWidth="2" /></svg>
        <svg viewBox="0 0 16 16" className="ml-[12px] size-4" aria-hidden="true"><path d="M7 2h7v13H7z" fill="#5fb947" stroke="#fff" strokeWidth="1.500" /><path d="M2 1v4M6 1v4M1 5h6v4H1zM4 9v6" stroke="#f1f1cf" strokeWidth="1.600" fill="#f1f1cf" /></svg>
        <svg viewBox="0 0 16 16" className="ml-[2px] size-4" aria-hidden="true"><path d="M6 1h9v7H6zM1 6h9v7H1z" fill="#2d64ad" stroke="#d6e6f7" /><circle cx="11" cy="11" r="4" fill="#2aa0d8" /><path d="M8 10l3-2 2 2-3 4z" fill="#6dc144" /></svg>
        <svg viewBox="0 0 16 16" className="ml-[2px] size-4" aria-hidden="true"><path d="M0 5h3l5-4v14l-5-4H0z" fill="#f2f2f2" /><circle cx="11" cy="10" r="4" fill="#fff" stroke="#d32f2f" strokeWidth="2" /><path d="M8 7l6 6" stroke="#d32f2f" strokeWidth="2" /></svg>
        <time className="ml-[9px] text-[12px]">11:46</time>
      </div>
    </footer>
  )
}

export default function App() {
  return (
    <div className="flex h-screen flex-col overflow-hidden bg-[#efefef] [font-family:'Noto_Sans','Noto_Sans_CJK_SC',sans-serif]">
      <TitleBar />
      <MenuBar />
      <StandardBars />
      <PropertyBars />
      <Workspace />
      <CommandWindow />
      <p className="h-[21px] shrink-0 border-t border-white bg-[#f0ecea] pl-[7px] text-[12px] leading-5 text-black">按住拾取键并拖动进行平移。</p>
      <Taskbar />
    </div>
  )
}
